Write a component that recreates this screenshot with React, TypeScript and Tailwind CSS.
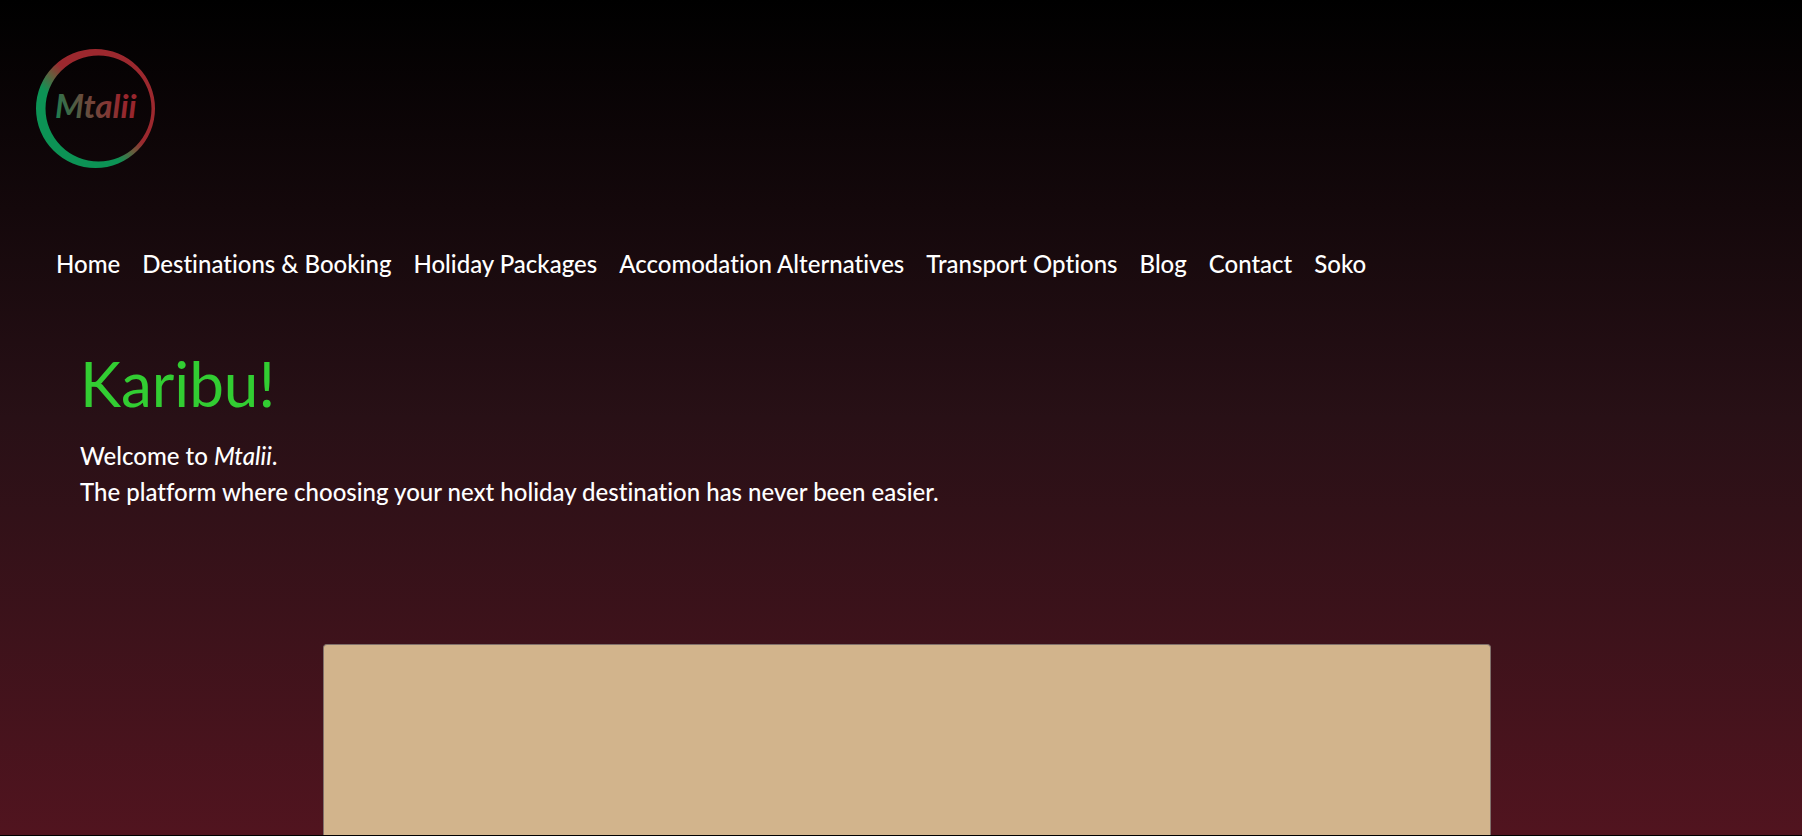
const links = [
  "Home",
  "Destinations & Booking",
  "Holiday Packages",
  "Accomodation Alternatives",
  "Transport Options",
  "Blog",
  "Contact",
  "Soko",
];

function Logo() {
  return (
    <svg className="h-[120px] w-[120px]" viewBox="0 0 120 120" role="img" aria-label="Mtalii">
      <defs>
        <linearGradient id="ring" gradientUnits="userSpaceOnUse" x1="37" y1="80" x2="71" y2="44">
          <stop offset="0.15" stopColor="#0c9355" />
          <stop offset="0.5" stopColor="#6b5a3c" />
          <stop offset="0.75" stopColor="#9c282e" />
        </linearGradient>
        <linearGradient id="word" gradientUnits="userSpaceOnUse" x1="20" y1="72" x2="84" y2="48">
          <stop offset="0" stopColor="#1a8050" />
          <stop offset="0.5" stopColor="#6b4a3c" />
          <stop offset="1" stopColor="#98262d" />
        </linearGradient>
      </defs>
      <path
        fill="url(#ring)"
        fillRule="evenodd"
        d="M59.5 1A59.5 59.5 0 1 0 59.5 120A59.5 59.5 0 1 0 59.5 1ZM62.5 7.5A53 53 0 1 1 62.5 113.5A53 53 0 1 1 62.5 7.5Z"
      />
      <text x="19" y="70" className="font-[Lato] text-[33px] font-bold italic" fill="url(#word)">
        Mtalii
      </text>
    </svg>
  );
}

export default function App() {
  return (
    <div className="flex min-h-screen flex-col border-b border-black bg-linear-to-b/srgb from-black via-[#281016] to-[#51141f] font-[Lato,sans-serif] text-2xl font-medium text-white [font-variant-ligatures:none]">
      <header>
        <a href="#home" className="mt-12 ml-9 block w-fit">
          <Logo />
        </a>
        <nav aria-label="Main" className="mt-20 px-14">
          <ul className="flex flex-wrap gap-[22px] leading-8">
            {links.map((label) => (
              <li key={label}>
                <a href="#home">{label}</a>
              </li>
            ))}
          </ul>
        </nav>
      </header>
      <main className="flex grow flex-col">
        <section className="mt-16 px-20">
          <h1 className="text-[62px] leading-[78px] font-normal text-[#32cd32]">Karibu!</h1>
          <p className="mt-4 leading-9">
            Welcome to <em>Mtalii</em>.
            <br />
            The platform where choosing your next holiday destination has never been easier.
          </p>
        </section>
        <section
          aria-label="Featured"
          className="mt-[134px] mr-[17.25%] ml-[17.95%] min-h-40 grow rounded-t-[4px] border border-b-0 border-[#80706a] bg-[#d2b48c]"
        />
      </main>
    </div>
  );
}
